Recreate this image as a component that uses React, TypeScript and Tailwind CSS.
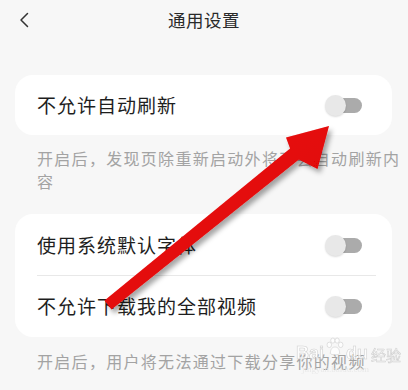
import React from "react";

function Toggle() {
  return (
    <div className="relative w-[37px] h-[21px] shrink-0">
      <div className="absolute right-0 top-[3px] w-[30px] h-[15px] rounded-full bg-[#ababab]" />
      <div className="absolute left-0 top-0 w-[21px] h-[21px] rounded-full bg-[#e8e8e8] shadow-[0_1px_2px_rgba(0,0,0,0.15)]" />
    </div>
  );
}

function Row({ label }: { label: string }) {
  return (
    <div className="h-[60px] flex items-center justify-between pl-[22px] pr-[30px]">
      <span className="text-[19px] tracking-[1px] text-[#1e1e1e]">{label}</span>
      <Toggle />
    </div>
  );
}

function Watermark() {
  return (
    <div className="absolute left-[296px] top-[336px] flex flex-col items-start pointer-events-none opacity-75">
      <div className="flex items-end gap-[1px]">
        <span
          className="text-[18px] leading-none font-bold text-white [-webkit-text-stroke:0.6px_#c4c4c4]"
          style={{ fontFamily: '"Liberation Sans", sans-serif' }}
        >
          Bai
        </span>
        <svg width="20" height="22" viewBox="0 0 28 28" className="mb-[4px]">
          <g fill="#ffffff" stroke="#c8c8c8" strokeWidth="1">
            <ellipse cx="6" cy="11" rx="3.2" ry="3.8" />
            <ellipse cx="11" cy="5" rx="3" ry="3.6" />
            <ellipse cx="17" cy="5" rx="3" ry="3.6" />
            <ellipse cx="22" cy="11" rx="3.2" ry="3.8" />
            <path d="M7.5 23 C7.5 16 11 14 14 14 C17 14 20.5 16 20.5 23 C20.5 25.5 7.5 25.5 7.5 23 Z" />
          </g>
        </svg>
        <span
          className="text-[18px] leading-none font-bold text-white [-webkit-text-stroke:0.6px_#c4c4c4]"
          style={{ fontFamily: '"Liberation Sans", sans-serif' }}
        >
          du
        </span>
        <span className="ml-[2px] text-[15px] leading-none text-white [-webkit-text-stroke:0.6px_#c4c4c4]">
          经验
        </span>
      </div>
      <span
        className="mt-[3px] ml-[6px] text-[9px] leading-none text-[#e4e4e4]"
        style={{ fontFamily: '"Liberation Serif", serif' }}
      >
        jingyan.baidu.com
      </span>
    </div>
  );
}

export default function App() {
  return (
    <div
      className="relative w-[408px] h-[390px] overflow-hidden bg-[#f7f7f7]"
      style={{ fontFamily: '"Noto Sans CJK SC", "Noto Sans", sans-serif' }}
    >
      <div className="h-[40px] grid grid-cols-[1fr_auto_1fr] items-center">
        <div className="pl-[18px] flex items-center">
          <svg width="12" height="16" viewBox="0 0 12 16">
            <path d="M9.5 1.5 L3 8 L9.5 14.5" fill="none" stroke="#333" strokeWidth="1.5" strokeLinecap="round" strokeLinejoin="round" />
          </svg>
        </div>
        <div className="text-[17.5px] tracking-[0.5px] text-[#2a2a2a]">通用设置</div>
        <div />
      </div>

      <div className="mt-[35px] ml-[15px] mr-[16px] rounded-[18px] bg-white">
        <Row label="不允许自动刷新" />
      </div>

      <p className="mt-[12px] pl-[37px] pr-[3px] text-[16px] tracking-[1.3px] leading-[23px] text-[#a3a3a3]">
        开启后，发现页除重新启动外将不会自动刷新内容
      </p>

      <div className="mt-[21px] ml-[15px] mr-[16px] rounded-[18px] bg-white py-[1px]">
        <Row label="使用系统默认字体" />
        <div className="ml-[22px] mr-[16px] h-px bg-[#e8e8e8]" />
        <Row label="不允许下载我的全部视频" />
      </div>

      <p className="mt-[13px] pl-[37px] pr-[3px] text-[16px] tracking-[1.3px] leading-[23px] text-[#a3a3a3]">
        开启后，用户将无法通过下载分享你的视频
      </p>

      <Watermark />

      {/* red arrow overlay */}
      <svg className="absolute inset-0 pointer-events-none" width="408" height="390" viewBox="0 0 408 390">
        <defs>
          <filter id="sh" x="-20%" y="-20%" width="140%" height="140%">
            <feDropShadow dx="3" dy="4" stdDeviation="2.5" floodColor="#000" floodOpacity="0.35" />
          </filter>
          <linearGradient id="rg" x1="0" y1="0" x2="1" y2="1">
            <stop offset="0" stopColor="#f01010" />
            <stop offset="1" stopColor="#d80000" />
          </linearGradient>
        </defs>
        <polygon
          filter="url(#sh)"
          fill="url(#rg)"
          points="104.5,300.5 290.1,148.6 286,137.5 329,126 317.5,169 298.9,159.4 111.5,309.5"
        />
      </svg>
    </div>
  );
}
